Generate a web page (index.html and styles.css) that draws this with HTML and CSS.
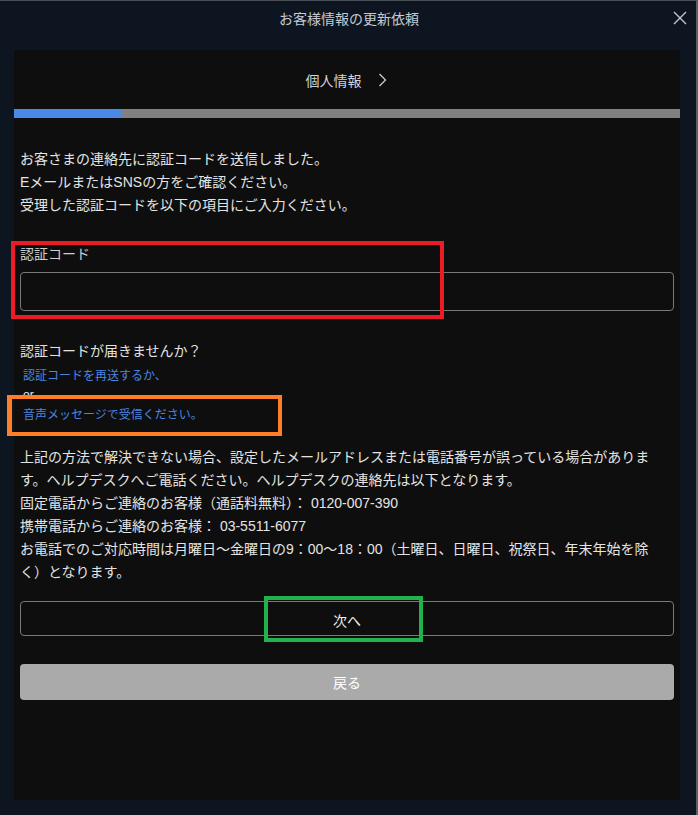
FILE: index.html
```html
<!DOCTYPE html>
<html lang="ja">
<head>
<meta charset="utf-8">
<title>お客様情報の更新依頼</title>
<link rel="stylesheet" href="styles.css">
</head>
<body>
<div class="dialog">
  <header class="dialog-header">
    <h1 class="dialog-title">お客様情報の更新依頼</h1>
    <button class="close" aria-label="閉じる">
      <svg width="14" height="14" viewBox="0 0 14 14"><path d="M1 1 L13 13 M13 1 L1 13" stroke="#c4c8ce" stroke-width="1.4" fill="none"/></svg>
    </button>
  </header>
  <main class="panel">
    <div class="step">
      <span class="step-name">個人情報</span>
      <svg class="chev" width="9" height="14" viewBox="0 0 9 14"><path d="M1.5 1 L7.5 7 L1.5 13" stroke="#c9cdd3" stroke-width="1.3" fill="none"/></svg>
    </div>
    <div class="progress"><div class="progress-fill" style="width:16%"></div></div>
    <div class="content">
      <p class="intro">お客さまの連絡先に認証コードを送信しました。<br>Eメールまたは<span class="lat">SNS</span>の方をご確認ください。<br>受理した認証コードを以下の項目にご入力ください。</p>
      <label class="field-label" for="code">認証コード</label>
      <input class="field" id="code" type="text">
      <p class="question">認証コードが届きませんか？</p>
      <a class="link link-first" href="#">認証コードを再送するか、</a>
      <span class="or">or</span>
      <a class="link" href="#">音声メッセージで受信ください。</a>
      <p class="help">上記の方法で解決できない場合、設定したメールアドレスまたは電話番号が誤っている場合があります。ヘルプデスクへご電話ください。ヘルプデスクの連絡先は以下となります。<br>固定電話からご連絡のお客様（通話料無料）：&nbsp;0120-007-390<br>携帯電話からご連絡のお客様：&nbsp;03-5511-6077<br>お電話でのご対応時間は月曜日～金曜日の9：00～18：00（土曜日、日曜日、祝祭日、年末年始を除く）となります。</p>
      <button class="btn btn-next">次へ</button>
      <button class="btn btn-back">戻る</button>
    </div>
  </main>
  <div class="mark mark-red"></div>
  <div class="mark mark-orange"></div>
  <div class="mark mark-green"></div>
</div>
</body>
</html>
```
FILE: styles.css
```css
* { box-sizing: border-box; }
html, body { margin: 0; padding: 0; }
body {
  background: #0c141e;
  font-family: "Liberation Sans", "Noto Sans CJK JP", sans-serif;
  color: #e2e2e2;
}
.dialog {
  position: relative;
  width: 698px;
  height: 815px;
  border-top: 1px solid #4a4f57;
  border-right: 2px solid #5a5f66;
  background: #0d1520;
  display: flex;
  flex-direction: column;
}
.dialog-header {
  height: 33px;
  display: flex;
  align-items: center;
  justify-content: center;
  position: relative;
}
.dialog-title {
  margin: 0;
  font-size: 14px;
  font-weight: normal;
  color: #c6cad0;
  padding-left: 2px;
}
.close {
  position: absolute;
  right: 9px;
  top: 10px;
  background: none;
  border: 0;
  padding: 0;
  width: 14px;
  height: 14px;
  display: block;
}
.close svg { display: block; }
.panel {
  margin: 16px 16px 15px 14px;
  background: #0e0e0e;
  flex: 1;
  display: flex;
  flex-direction: column;
}
.step {
  height: 59px;
  display: flex;
  align-items: center;
  justify-content: center;
  gap: 16px;
  padding-right: 2px;
}
.step-name { font-size: 14px; color: #d0d4da; }
.chev { display: block; }
.progress {
  height: 9px;
  background: #808080;
}
.progress-fill { height: 100%; background: #4a89e8; }
.content {
  padding: 30px 6px 0 6px;
  display: flex;
  flex-direction: column;
  align-items: flex-start;
}
.intro {
  margin: 0;
  font-size: 14px;
  line-height: 23px;
  color: #e4e4e4;
}
.field-label {
  margin-top: 27px;
  font-size: 14px;
  line-height: 20px;
  color: #cfcfcf;
}
.field {
  margin-top: 8px;
  width: 100%;
  height: 39px;
  background: #0e0e0e;
  border: 1px solid #7a7a7a;
  border-radius: 4px;
  color: #fff;
  font-size: 14px;
}
.question {
  margin: 29px 0 0 0;
  font-size: 14px;
  line-height: 23px;
  color: #e2e2e2;
}
.link {
  font-size: 12px;
  line-height: 20px;
  color: #4a86e0;
  text-decoration: none;
  margin-left: 3px;
  margin-top: 1px;
}
.link-first { margin-top: 3px; }
.or {
  font-size: 12px;
  line-height: 18px;
  color: #e8e8e8;
  margin-left: 3px;
}
.help {
  margin: 21px 0 0 0;
  font-size: 14px;
  line-height: 23px;
  color: #e4e4e4;
  padding-right: 16px;
}
.btn {
  width: 100%;
  font-family: inherit;
  font-size: 14px;
  border-radius: 4px;
  padding: 0;
}
.btn-next {
  margin-top: 17px;
  height: 35px;
  background: #0e0e0e;
  border: 1px solid #7a7a7a;
  color: #f0f0f0;
  padding-top: 2px;
}
.btn-back {
  margin-top: 28px;
  height: 36px;
  background: #aaaaaa;
  border: 0;
  color: #ffffff;
}
.mark {
  position: absolute;
  border: 4px solid;
  pointer-events: none;
}
.mark-red { left: 11px; top: 240px; width: 433px; height: 78px; border-color: #ec1c24; }
.mark-orange { left: 7px; top: 394px; width: 275px; height: 41px; border-color: #ff7f27; border-width: 4px 4px 4px 5px; }
.mark-green { left: 264px; top: 595px; width: 159px; height: 46px; border-color: #22b14c; }
```
